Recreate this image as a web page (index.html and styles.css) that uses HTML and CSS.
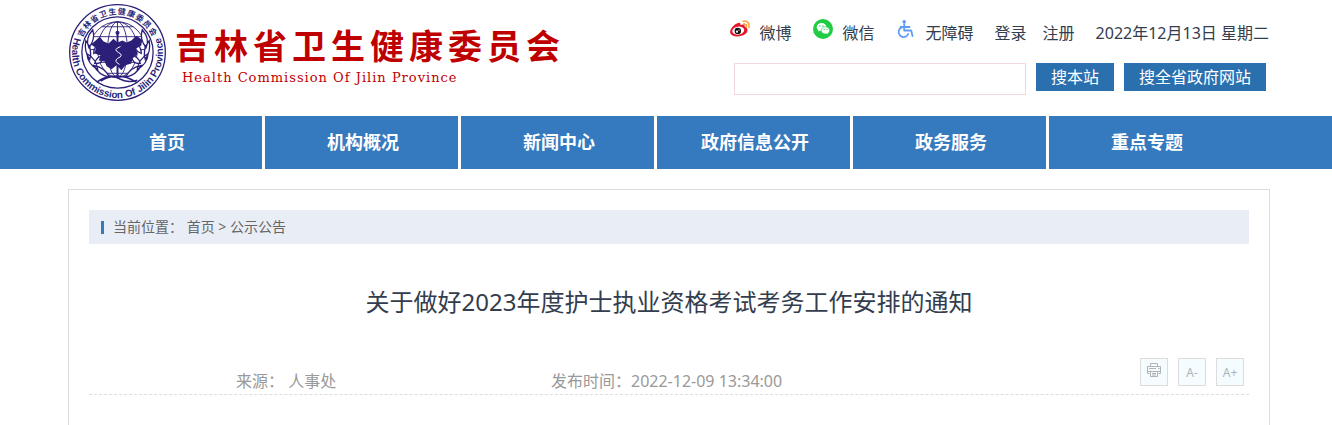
FILE: index.html
```html
<!DOCTYPE html>
<html lang="zh-CN">
	<head>
		<meta charset="UTF-8" />
		<meta name="viewport" content="width=device-width, initial-scale=1.0" />
		<title>关于做好2023年度护士执业资格考试考务工作安排的通知</title>
		<link rel="stylesheet" href="styles.css">
	</head>
	<body>
		<header class="header">
			<a class="brand" href="#">
				<svg class="emblem" viewBox="0 0 100 100" aria-hidden="true">
					<defs>
						<path id="ring-top" d="M11.5 50a38.5 38.5 0 0 1 77 0" />
						<path id="ring-bottom" d="M9.6 28a46 46 0 1 0 80.8 0" />
					</defs>
					<circle class="line" cx="50" cy="50" r="48.3" />
					<circle class="line" cx="50" cy="50" r="36" />
					<text class="ring-cn"><textPath href="#ring-top" startOffset="50%">吉林省卫生健康委员会</textPath></text>
					<text class="ring-en"><textPath href="#ring-bottom" startOffset="50%">Health Commission Of Jilin Province</textPath></text>
					<!-- globe -->
					<g class="thin">
						<circle cx="50" cy="47" r="28" />
						<ellipse cx="50" cy="47" rx="10" ry="28" />
						<ellipse cx="50" cy="47" rx="20" ry="28" />
						<path d="M50 19v56M22 47h56M25 34h50M25 60h50M34 24h32M36 71h28" />
					</g>
					<!-- branches -->
					<g class="leaf">
						<path d="M25 27q-8 9-4 18 7-8 4-18zM18 38q-2 11 4 19 3-10-4-19zM19 51q1 11 11 16-1-10-11-16zM26 63q5 10 16 12-5-10-16-12zM33 39q-7 4-7 12 8-3 7-12zM36 53q-7 1-9 8 8 1 9-8z" />
						<path d="M75 27q8 9 4 18-7-8-4-18zM82 38q2 11-4 19-3-10 4-19zM81 51q-1 11-11 16 1-10 11-16zM74 63q-5 10-16 12 5-10 16-12zM67 39q7 4 7 12-8-3-7-12zM64 53q7 1 9 8-8 1-9-8z" />
					</g>
					<path class="road" d="M29 80q13-9 24-3 8 4 17 1M33 79q17-11 36 1" />
					<path class="land" d="M28 38l4-4 4 5 5 2 5-5 4 4 5-2 4 2 5-2 5-5 6 4-1 6-5 3 1 6-5 4-1 5-6 2-4 5-5-5-5 4-5-3-2-5-6-1 2-5-6-2 1-6-5-3z" />
					<path class="staff" d="M50 30v44" />
					<circle class="knob" cx="50" cy="30" r="2" />
					<path class="snake" d="M53 44q-8 3-2 6t-1 6q-4 3 2 6" />
				</svg>
				<span class="brand-text">
					<span class="brand-cn">吉林省卫生健康委员会</span>
					<span class="brand-en">Health Commission Of Jilin Province</span>
				</span>
			</a>
			<div class="tools">
				<div class="links">
					<a class="icon-link" href="#">
						<svg viewBox="0 0 20 20" aria-hidden="true">
							<path fill="#e6162d" d="M8.300 3.900c1.500-.5 2.500.2 2.200 2 2.700-1 4.600-.5 4 1.500 4.400 1.300 3.500 5.800.4 7.900-4.400 3.100-13.500 3-14.700-1.600C-.6 10.300 4 5 8.300 3.900z" />
							<ellipse cx="8.300" cy="11.700" rx="6" ry="4" fill="#fff" transform="rotate(-8 8 12)" />
							<circle cx="7.800" cy="11.900" r="3.200" fill="#111" />
							<circle cx="7" cy="12.700" r="1.100" fill="#fff" />
							<circle cx="9" cy="11.100" r=".6" fill="#fff" />
							<path d="M13.200 2.200c4-.8 6.800 2.300 5.600 6.200M13.600 5c2-.3 3.300 1 2.700 2.800" fill="none" stroke="#f7a02f" stroke-width="1.500" stroke-linecap="round" />
						</svg>
						<span>微博</span>
					</a>
					<a class="icon-link" href="#">
						<svg viewBox="0 0 20 20" aria-hidden="true">
							<circle cx="10" cy="10" r="10" fill="#1fcc44" />
							<path fill="#fff" d="M8.500 4C5.800 4 3.700 5.700 3.700 8c0 1.300.7 2.300 1.700 3l-.4 1.600 1.700-.9c3.500 1 6.700-.8 6.700-3.700C13.400 5.700 11.200 4 8.500 4z" />
							<path fill="#fff" stroke="#1fcc44" stroke-width=".6" d="M12.500 7.800c-2.500 0-4.300 1.600-4.300 3.600 0 2.400 2.700 4.200 5.600 3.400l1.500.9-.4-1.400c1.100-.7 1.800-1.700 1.800-2.900 0-2-1.800-3.600-4.200-3.600z" />
							<g fill="#1fcc44"><circle cx="7" cy="7" r=".7" /><circle cx="10" cy="7" r=".7" /><circle cx="11.200" cy="10.400" r=".6" /><circle cx="14" cy="10.400" r=".6" /></g>
						</svg>
						<span>微信</span>
					</a>
					<a class="icon-link" href="#">
						<svg viewBox="0 0 20 20" aria-hidden="true">
							<circle cx="8.200" cy="2.800" r="1.800" fill="#5e9cf5" />
							<path d="M8.200 5v6.500h7l1.300 5.500M4.500 8h9M6 8.300a5 5 0 1 0 6.200 6.700" fill="none" stroke="#5e9cf5" stroke-width="1.800" stroke-linecap="round" stroke-linejoin="round" />
						</svg>
						<span>无障碍</span>
					</a>
					<span class="account">
						<a href="#">登录</a>
						<a href="#">注册</a>
					</span>
					<span>2022年12月13日 星期二</span>
				</div>
				<form class="search">
					<input class="search-input" type="text" aria-label="搜索" />
					<button class="search-btn" type="button">搜本站</button>
					<button class="search-btn" type="button">搜全省政府网站</button>
				</form>
			</div>
		</header>
		<nav class="nav">
			<a href="#">首页</a>
			<a href="#">机构概况</a>
			<a href="#">新闻中心</a>
			<a href="#">政府信息公开</a>
			<a href="#">政务服务</a>
			<a href="#">重点专题</a>
		</nav>
		<main class="panel">
			<div class="crumb">
				<span>当前位置： <a href="#">首页</a> &gt; <a href="#">公示公告</a></span>
			</div>
			<h1 class="title">关于做好2023年度护士执业资格考试考务工作安排的通知</h1>
			<div class="meta">
				<span class="source">来源： 人事处</span>
				<span class="time">发布时间：2022-12-09 13:34:00</span>
				<div class="actions">
					<button class="action" type="button" aria-label="打印">
						<svg viewBox="0 0 16 16" aria-hidden="true">
							<path d="M4.500 4.500v-3h7v3M3.500 11.500h-2v-7h13v7h-2M4.500 9.500h7v5h-7zM1.500 9.500h13M3 6.500h7M12 6.500h1.500M6 11.500h4M6 13h4" />
						</svg>
					</button>
					<button class="action" type="button">A-</button>
					<button class="action" type="button">A+</button>
				</div>
			</div>
		</main>
	</body>
</html>
```
FILE: styles.css
```css
* {
	box-sizing: border-box;
}
body {
	display: flex;
	flex-direction: column;
	min-height: 100vh;
	margin: 0;
	background: #fff;
	color: #333d4d;
	font: 16px/28px "Noto Sans", "Noto Sans CJK SC", sans-serif;
}
a {
	color: inherit;
	text-decoration: none;
}
button,
input {
	font-family: inherit;
}

/* header */
.header {
	display: flex;
	justify-content: space-between;
	height: 116px;
	padding: 0 63px 0 68px;
}
.brand {
	display: flex;
	gap: 8px;
	padding-top: 3px;
	color: #bf0000;
}
.emblem {
	width: 99px;
	height: 99px;
}
.emblem text {
	fill: #2b1f78;
	text-anchor: middle;
}
.line,
.thin,
.road {
	fill: none;
	stroke: #2b1f78;
}
.line {
	stroke-width: 1.3;
}
.thin {
	stroke-width: 0.9;
}
.leaf {
	fill: #fff;
	stroke: #2b1f78;
	stroke-width: 1.3;
}
.land {
	fill: #2b1f78;
}
.road {
	stroke-width: 1.5;
}
.staff {
	stroke: #2b1f78;
	stroke-width: 2;
}
.knob {
	fill: #2b1f78;
}
.snake {
	fill: none;
	stroke: #fff;
	stroke-width: 1;
}
.ring-cn {
	font: bold 8px "Noto Sans CJK SC", sans-serif;
	letter-spacing: 1px;
}
.ring-en {
	font: bold 10px "Liberation Sans", sans-serif;
}
.brand-text {
	display: flex;
	flex-direction: column;
	padding-top: 20px;
}
.brand-cn {
	font: bold 34px/44px "Noto Sans CJK SC", sans-serif;
	letter-spacing: 5px;
}
.brand-en {
	padding-left: 7px;
	font: 13px/22px "DejaVu Serif", serif;
	letter-spacing: 1px;
}
.tools {
	display: flex;
	flex-direction: column;
	align-items: flex-end;
	gap: 16px;
	padding-top: 19px;
}
.links {
	display: flex;
	gap: 21px;
}
.icon-link {
	display: flex;
	gap: 10px;
}
.icon-link svg {
	width: 20px;
	height: 20px;
}
.account {
	display: flex;
	gap: 16px;
}
.search {
	display: flex;
	align-items: flex-start;
	gap: 10px;
	padding-right: 3px;
}
.search-input {
	width: 292px;
	height: 32px;
	border: 1px solid #f3d9db;
	background: #fff;
}
.search-btn {
	height: 28px;
	padding: 0 15px;
	border: 0;
	background: #2a70ae;
	color: #fff;
	font-size: 16px;
	line-height: 28px;
}

/* nav */
.nav {
	display: flex;
	padding-left: 69px;
	background: #3579bf;
}
.nav a {
	width: 196px;
	padding-left: 3px;
	border-right: 3px solid #fff;
	color: #fff;
	font-size: 18px;
	font-weight: bold;
	line-height: 53px;
	text-align: center;
}
.nav a:last-child {
	border-color: transparent;
}

/* article */
.panel {
	flex: 1;
	margin: 20px 62px 0 68px;
	padding: 20px 20px 30px;
	border: 1px solid #ddd;
	border-bottom: 0;
}
.crumb {
	display: flex;
	align-items: center;
	gap: 9px;
	height: 34px;
	padding-left: 12px;
	background: #e9eef6;
	color: #666;
	font-size: 14px;
}
.crumb::before {
	content: "";
	width: 3px;
	height: 13px;
	background: #3579bf;
}
.title {
	margin: 38px 0 36px;
	font-size: 24px;
	font-weight: normal;
	line-height: 40px;
	text-align: center;
}
.meta {
	display: flex;
	height: 37px;
	padding-right: 5px;
	border-bottom: 1px dashed #ddd;
	color: #999;
}
.source,
.time {
	padding-top: 9px;
}
.source {
	width: 40%;
	padding-left: 147px;
}
.actions {
	display: flex;
	gap: 10px;
	margin-left: auto;
}
.action {
	width: 28px;
	height: 28px;
	padding: 0;
	border: 1px solid #ddd;
	background: #f4fcff;
	color: #b3b3b3;
	font-size: 12px;
}
.action svg {
	width: 16px;
	height: 16px;
	fill: none;
	stroke: #b3b3b3;
}
```
